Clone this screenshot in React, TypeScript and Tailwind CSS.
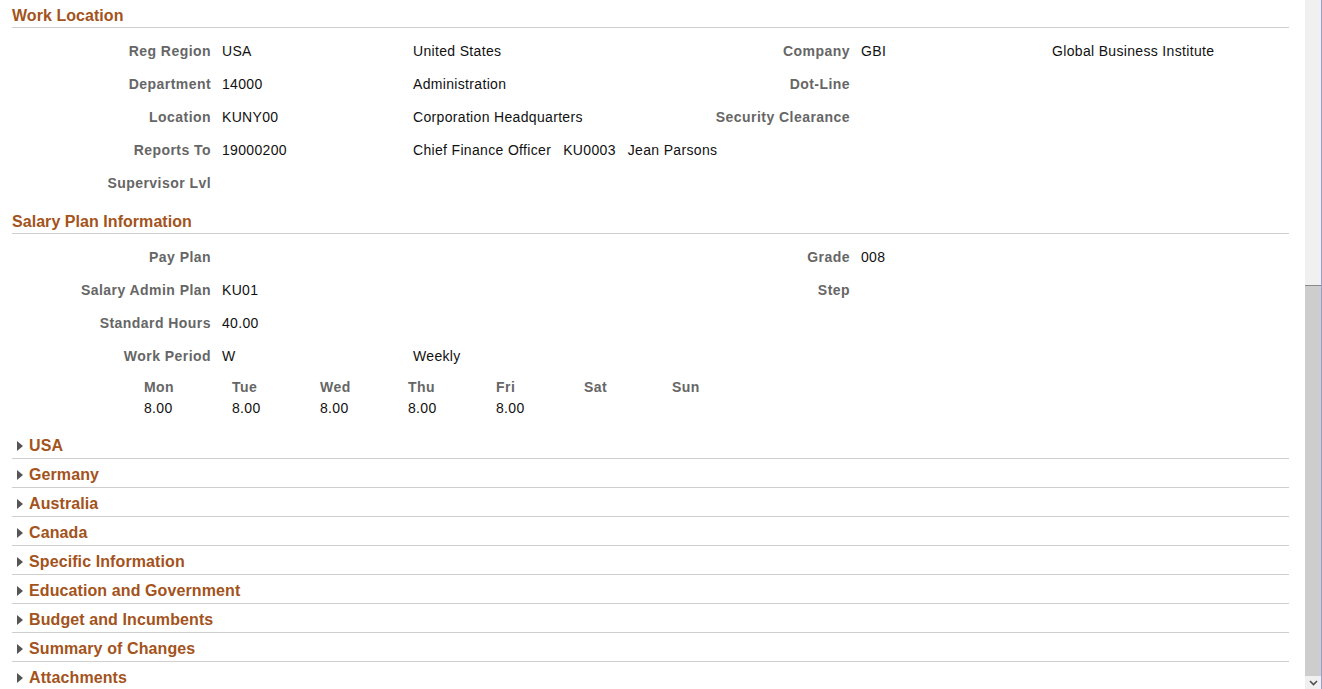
import { ReactNode } from "react";

type Row = {
  label: string;
  value?: string;
  desc?: ReactNode;
  label2?: string;
  value2?: string;
  desc2?: string;
};

const workRows: Row[] = [
  { label: "Reg Region", value: "USA", desc: "United States", label2: "Company", value2: "GBI", desc2: "Global Business Institute" },
  { label: "Department", value: "14000", desc: "Administration", label2: "Dot-Line" },
  { label: "Location", value: "KUNY00", desc: "Corporation Headquarters", label2: "Security Clearance" },
  {
    label: "Reports To",
    value: "19000200",
    desc: (
      <span className="flex gap-[12px]">
        <span>Chief Finance Officer</span>
        <span>KU0003</span>
        <span>Jean Parsons</span>
      </span>
    ),
  },
  { label: "Supervisor Lvl" },
];

const salaryRows: Row[] = [
  { label: "Pay Plan", label2: "Grade", value2: "008" },
  { label: "Salary Admin Plan", value: "KU01", label2: "Step" },
  { label: "Standard Hours", value: "40.00" },
  { label: "Work Period", value: "W", desc: "Weekly" },
];

const days = [
  { d: "Mon", h: "8.00" },
  { d: "Tue", h: "8.00" },
  { d: "Wed", h: "8.00" },
  { d: "Thu", h: "8.00" },
  { d: "Fri", h: "8.00" },
  { d: "Sat", h: "" },
  { d: "Sun", h: "" },
];

const sections = [
  "USA",
  "Germany",
  "Australia",
  "Canada",
  "Specific Information",
  "Education and Government",
  "Budget and Incumbents",
  "Summary of Changes",
  "Attachments",
];

function Heading({ title, className = "" }: { title: string; className?: string }) {
  return (
    <div className={`border-b border-[#cfcfcf] pt-[6px] pb-[1px] ${className}`}>
      <h2 className="text-[16px] leading-[20px] font-bold text-[#a3531b] tracking-[0.05px]">{title}</h2>
    </div>
  );
}

function FieldRow({ row }: { row: Row }) {
  return (
    <div className="flex items-center h-[33px] text-[14px] leading-[18px] whitespace-nowrap">
      <div className="w-[199px] text-right font-bold text-[#666666] tracking-[0.45px]">{row.label}</div>
      <div className="w-[191px] ml-[11px] text-[#111] tracking-[0.33px]">{row.value}</div>
      <div className="w-[300px] text-[#111] tracking-[0.33px]">{row.desc}</div>
      <div className="w-[137px] text-right font-bold text-[#666666] tracking-[0.45px]">{row.label2}</div>
      <div className="w-[191px] ml-[11px] text-[#111] tracking-[0.33px]">{row.value2}</div>
      <div className="text-[#111] tracking-[0.33px]">{row.desc2}</div>
    </div>
  );
}

function Section({ title, last }: { title: string; last?: boolean }) {
  return (
    <div className={`flex items-center pt-[6px] pb-[2px] ${last ? "" : "border-b border-[#cfcfcf]"}`}>
      <svg width="6" height="10" viewBox="0 0 6 10" className="ml-[5px] mr-[6px]">
        <path d="M0 0 L6 5 L0 10 Z" fill="#555555" />
      </svg>
      <span className="text-[16px] leading-[20px] font-bold text-[#a3531b] tracking-[0.1px]">{title}</span>
    </div>
  );
}

export default function App() {
  return (
    <div className="flex h-[689px] w-[1322px] overflow-hidden bg-white font-['Liberation_Sans',Arial,sans-serif]">
      <div className="flex-1 pl-[12px] pr-[16px] overflow-hidden">
        <Heading title="Work Location" />
        <div className="mt-[6px]">
          {workRows.map((r) => (
            <FieldRow key={r.label} row={r} />
          ))}
        </div>

        <Heading title="Salary Plan Information" className="mt-[7px]" />
        <div className="mt-[6px]">
          {salaryRows.map((r) => (
            <FieldRow key={r.label} row={r} />
          ))}
        </div>

        <div className="flex ml-[132px] mt-[5px] text-[14px] leading-[21px]">
          {days.map((x) => (
            <div key={x.d} className="w-[88px]">
              <div className="font-bold text-[#666666] tracking-[0.45px]">{x.d}</div>
              <div className="h-[21px] text-[#111] tracking-[0.33px]">{x.h}</div>
            </div>
          ))}
        </div>

        <div className="mt-[11px]">
          {sections.map((s, i) => (
            <Section key={s} title={s} last={i === sections.length - 1} />
          ))}
        </div>
      </div>

      <div className="flex flex-col w-[17px] bg-[#f0f0f0] border-r border-[#9b9bd6]">
        <div className="h-[285px]" />
        <div className="h-[391px] bg-[#cdcdcd] border-t border-[#8a8a8a]" />
        <div className="flex-1 flex items-center justify-center">
          <svg width="9" height="6" viewBox="0 0 9 6">
            <path d="M1 1 L4.5 4.5 L8 1" stroke="#505050" strokeWidth="1.6" fill="none" />
          </svg>
        </div>
      </div>
    </div>
  );
}
